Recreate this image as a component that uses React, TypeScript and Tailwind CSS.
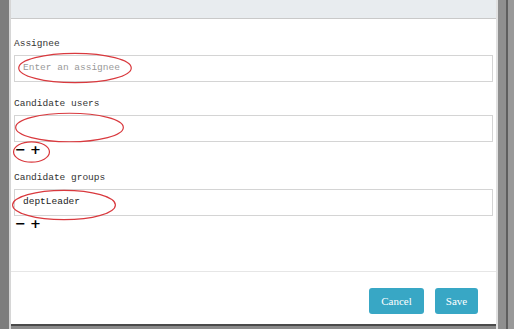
import React from "react";

const mono = { fontFamily: '"Liberation Mono", "DejaVu Sans Mono", monospace' };

const Field = ({ label, value, placeholder, tools }: { label: string; value?: string; placeholder?: string; tools?: boolean }) => (
  <div className="flex flex-col">
    <label className="text-[9.5px] text-[#333] leading-[12px] mb-[5px]">{label}</label>
    <div className="h-[27px] border border-[#d4d4d4] bg-white flex items-center px-[8px] text-[9.5px]">
      {value ? <span className="text-[#222]">{value}</span> : <span className="text-[#999]">{placeholder}</span>}
    </div>
    {tools && (
      <div className="flex items-center gap-[4px] h-[14px] pl-[1px] text-[13px] font-bold text-black leading-none" style={{ fontFamily: '"DejaVu Sans", sans-serif' }}>
        <span>−</span>
        <span>+</span>
      </div>
    )}
  </div>
);

const Ring = ({ className }: { className: string }) => (
  <svg className={"absolute pointer-events-none " + className} viewBox="0 0 100 100" preserveAspectRatio="none">
    <ellipse cx="50" cy="50" rx="48.5" ry="46" fill="none" stroke="#d9393e" strokeWidth="1.2" vectorEffect="non-scaling-stroke" />
  </svg>
);

export default function App() {
  return (
    <div className="w-[514px] h-[329px] bg-[#8a8a8a] flex overflow-hidden relative" style={mono}>
      <div className="w-[9px] bg-[#7d7d7d]" />
      <div className="w-[2px] bg-[#d6d6d6]" />
      <div className="w-[485px] h-[326px] bg-white flex flex-col border-b-2 border-[#4a4a4a]">
        <div className="h-[19px] bg-[#e8ecef] border-b border-[#c9c9c9]" />
        <div className="flex flex-col px-[3px] pt-[19px] gap-[16px] h-[252px]">
          <Field label="Assignee" placeholder="Enter an assignee" />
          <Field label="Candidate users" tools />
          <Field label="Candidate groups" value="deptLeader" tools />
        </div>
        <div className="border-t border-[#e6e6e6] flex justify-end gap-[11px] pt-[16px] pr-[18px]">
          <button className="h-[26px] w-[55px] rounded-[3px] bg-[#38a7c5] text-white text-[11px]" style={{ fontFamily: '"Liberation Serif", serif' }}>Cancel</button>
          <button className="h-[26px] w-[43px] rounded-[3px] bg-[#38a7c5] text-white text-[11px]" style={{ fontFamily: '"Liberation Serif", serif' }}>Save</button>
        </div>
      </div>
      <div className="w-[2px] bg-[#e0e0e0]" />
      <div className="w-[8px] bg-[#8f8f8f]" />
      <div className="w-[2px] bg-[#5e5e5e]" />
      <div className="flex-1 bg-[#999]" />
      <Ring className="left-[17px] top-[52px] w-[116px] h-[32px]" />
      <Ring className="left-[14px] top-[112px] w-[111px] h-[31px]" />
      <Ring className="left-[13px] top-[141px] w-[37px] h-[22px]" />
      <Ring className="left-[11px] top-[189px] w-[106px] h-[32px]" />
    </div>
  );
}
